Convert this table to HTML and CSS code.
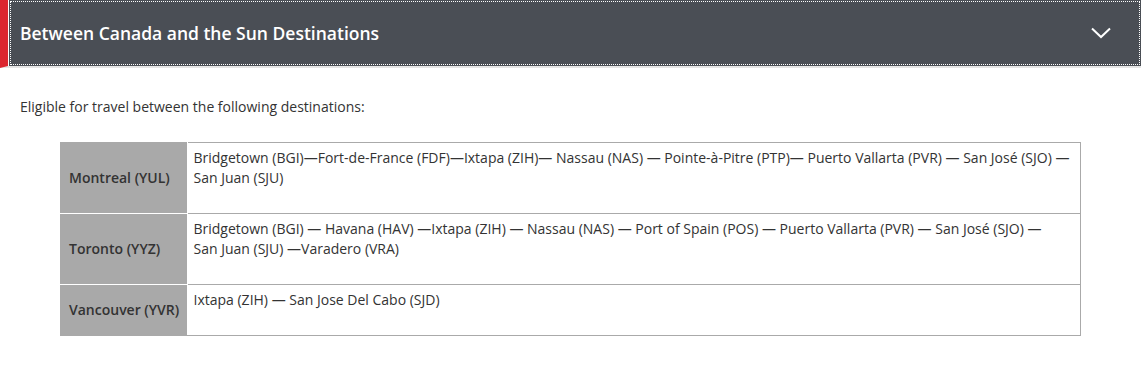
FILE: index.html
```html
<!DOCTYPE html>
<html>
<head>
<meta charset="utf-8">
<link rel="stylesheet" href="styles.css">
</head>
<body>
<div class="accordion">
  <div class="acc-head">
    <div class="acc-title">
      <span>Between Canada and the Sun Destinations</span>
      <svg class="chev" width="20" height="12" viewBox="0 0 20 12"><path d="M1 1.5 L10 10 L19 1.5" fill="none" stroke="#fff" stroke-width="2"/></svg>
    </div>
  </div>
  <div class="acc-body">
    <p class="intro">Eligible for travel between the following destinations:</p>
    <table class="routes">
      <tr>
        <th>Montreal (YUL)</th>
        <td><p>Bridgetown (BGI)—Fort-de-France (FDF)—Ixtapa (ZIH)— Nassau (NAS) — Pointe-à-Pitre (PTP)— Puerto Vallarta (PVR) — San José (SJO) — San&nbsp;Juan (SJU)</p></td>
      </tr>
      <tr>
        <th>Toronto (YYZ)</th>
        <td><p>Bridgetown (BGI) — Havana (HAV) —Ixtapa (ZIH) — Nassau (NAS) — Port of Spain (POS) — Puerto Vallarta (PVR) — San José (SJO) — San&nbsp;Juan (SJU) —Varadero (VRA)</p></td>
      </tr>
      <tr>
        <th>Vancouver (YVR)</th>
        <td><p>Ixtapa (ZIH) — San Jose Del Cabo (SJD)</p></td>
      </tr>
    </table>
  </div>
</div>
</body>
</html>
```
FILE: styles.css
```css
html, body {
  margin: 0;
  padding: 0;
  background: #fff;
}
body {
  font-family: "Open Sans", "Liberation Sans", sans-serif;
  color: #333;
}
.accordion {
  width: 1141px;
}
.acc-head {
  display: flex;
  border-left: 8px solid #dc2630;
  border-bottom: 2px solid #e6e6e6;
}
.acc-title {
  flex: 1;
  margin-left: 1px;
  height: 66px;
  box-sizing: border-box;
  background: #4a4e55;
  display: flex;
  align-items: center;
  justify-content: space-between;
  padding: 0 30px 0 11px;
  outline: 1px dotted #fff;
  outline-offset: -2px;
  color: #fff;
  font-size: 17.5px;
  font-weight: 600;
}
.chev {
  display: block;
}
.acc-body {
  padding: 29px 20px 30px 20px;
}
.intro {
  margin: 0 0 25px 0;
  font-size: 14px;
  line-height: 20px;
}
.routes {
  margin-left: 40px;
  width: 1021px;
  border-collapse: collapse;
  font-size: 14px;
  line-height: 20px;
}
.routes th {
  width: 127px;
  box-sizing: border-box;
  background: #a9a9a9;
  border: 1px solid #fff;
  border-left: none;
  text-align: left;
  vertical-align: middle;
  padding: 0 6px 0 9px;
  font-weight: 600;
  color: #333;
  white-space: nowrap;
}
.routes tr:first-child th {
  border-top: 1px solid #a9a9a9;
}
.routes tr:last-child th {
  border-bottom: 1px solid #a9a9a9;
}
.routes td {
  border: 1px solid #aaa;
  vertical-align: top;
  padding: 5px 6px 0 6px;
}
.routes td p {
  margin: 0 0 25px 0;
}
```
